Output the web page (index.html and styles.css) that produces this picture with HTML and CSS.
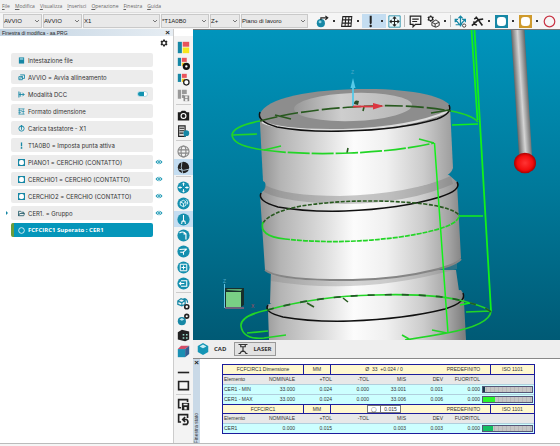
FILE: index.html
```html
<!DOCTYPE html>
<html lang="it">
<head>
<meta charset="utf-8">
<title>Finestra di modifica - aa.PRG</title>
<link rel="stylesheet" href="styles.css">
</head>
<body>
<svg class="defs" aria-hidden="true">
  <symbol id="chev" viewBox="0 0 8 8"><path d="M2 3l2 2 2-2" fill="none" stroke="#777" stroke-width="1"/></symbol>
  <symbol id="eye" viewBox="0 0 16 12"><path d="M1 6Q8-3 15 6Q8 15 1 6Z" fill="#1193b0"/><circle cx="8" cy="6" r="3.600" fill="#fff"/><circle cx="8" cy="6" r="2" fill="#1193b0"/></symbol>
  <symbol id="sq" viewBox="0 0 16 16"><path fill="currentColor" d="M0 0h16v16H0z"/><rect x="2.500" y="2.500" width="11" height="11" rx="4" fill="#fff"/></symbol>
  <symbol id="ball" viewBox="0 0 16 16"><circle cx="8" cy="8" r="7.500" fill="#148fae"/></symbol>
  <symbol id="palette" viewBox="0 0 16 16"><path fill="#1687a5" d="M1 1h5v14H1z"/><path fill="#e9545b" d="M7 1h8v6H7z"/><path fill="#f6e61d" d="M7 8h8v7H7z"/></symbol>
  <symbol id="palette-s" viewBox="0 0 16 16"><path fill="#1687a5" d="M1 1h4v10H1z"/><path fill="#e9545b" d="M6 1h6v5H6z"/><path fill="#f6c61d" d="M6 7h4v4H6z"/></symbol>
  <symbol id="gear" viewBox="0 0 16 16"><path fill="#222" fill-rule="evenodd" d="M6.500 1h3l.5 2 1.500.8 2-.6 1.500 2.600-1.500 1.400v1.600l1.500 1.400-1.500 2.600-2-.6-1.500.8-.5 2h-3L6 13l-1.500-.8-2 .6L1 10.200l1.500-1.400V7.200L1 5.800l1.500-2.600 2 .6L6 3zM8 5a3 3 0 1 0 0 6 3 3 0 0 0 0-6z"/></symbol>
</svg>

<nav class="menu" aria-label="Menu">
  <a href="#">File</a><a href="#">Modifica</a><a href="#">Visualizza</a><a href="#">Inserisci</a><a href="#">Operazione</a><a href="#">Finestra</a><a href="#">Guida</a>
</nav>

<div class="toolbar">
  <label class="pick w-s"><select aria-label="Programma"><option>AVVIO</option></select><svg><use href="#chev"/></svg></label>
  <label class="pick w-s"><select aria-label="Allineamento"><option>AVVIO</option></select><svg><use href="#chev"/></svg></label>
  <label class="pick w-l"><select aria-label="Tastatore"><option>X1</option></select><svg><use href="#chev"/></svg></label>
  <label class="pick w-m"><select aria-label="Punta"><option>*T1A0B0</option></select><svg><use href="#chev"/></svg></label>
  <label class="pick w-xs"><select aria-label="Asse"><option>Z+</option></select><svg><use href="#chev"/></svg></label>
  <label class="pick w-xl"><select aria-label="Piano"><option>Piano di lavoro</option></select><svg><use href="#chev"/></svg></label>
  <div class="tools">
    <button class="drop" aria-label="Vista"><svg viewBox="0 0 16 16"><circle cx="6" cy="10" r="5" fill="#1687a5"/><circle cx="5" cy="8.500" r="1.800" fill="#8fd3e3"/><path d="M6 6V3.500h8M11.500 1l3 2.500-3 2.500" fill="none" stroke="#222" stroke-width="1.400"/></svg></button>
    <button class="drop" aria-label="Griglia"><svg viewBox="0 0 16 16"><path d="M3.500 2h11l-1 12H2zM7.200 2l-1 12M11 2l-1 12M3 6h11M2.500 10H14" fill="none" stroke="#222" stroke-width="1.300"/></svg></button>
    <button class="drop on" aria-label="Punta attiva"><svg viewBox="0 0 16 16"><path d="M7 1h2.500v8.500l-.7 2H7.700L7 9.500z" fill="#222"/><circle cx="8.200" cy="13.500" r="1.500" fill="#222"/></svg></button>
    <button aria-label="Adatta"><svg viewBox="0 0 16 16"><path d="M1 1h14v14H1z" fill="#e8f6fa" stroke="#1687a5"/><path d="M8 2.500v11M2.500 8h11M6 4.500l2-2 2 2M6 11.500l2 2 2-2M4.500 6l-2 2 2 2M11.500 6l2 2-2 2" fill="none" stroke="#222" stroke-width="1.300"/></svg></button>
    <i></i>
    <button class="note" aria-label="Commento"><svg viewBox="0 0 16 16"><path d="M1.500 1.500h13v10H8L5 14.500v-3H1.500zM4 5h8M4 8h6" fill="none" stroke="#222" stroke-width="1.500"/></svg></button>
    <button class="drop" aria-label="Impostazioni"><svg viewBox="0 0 16 16"><use href="#gear" x="0" y="0" width="9" height="9"/><path d="M6 9l5-3 4 3v4l-4 2-5-2zM6 9l4 2 5-2M10 11v4" fill="none" stroke="#333" stroke-width="1.200"/></svg></button>
    <i></i>
    <button aria-label="Percorso"><svg viewBox="0 0 16 16"><path d="M8 14V2M5.500 4L8 1.500 10.500 4M8 13L2 6M1.500 9V5.500H5M8 12l5-6M10 5.500h4V9M2 12h8" fill="none" stroke="#1687a5" stroke-width="1.500"/><circle cx="12.500" cy="13" r="2" fill="#fff" stroke="#222"/></svg></button>
    <button class="drop" aria-label="Misura"><svg viewBox="0 0 16 16"><path d="M1 13L9 6l6-1M6 2l3 4 5 7M3 8l4 5M4 5l3-2" fill="none" stroke="#222" stroke-width="2"/></svg></button>
    <button class="drop teal" aria-label="Cerchio teorico"><svg><use href="#sq"/></svg></button>
    <button class="drop gold" aria-label="Cerchio costruito"><svg><use href="#sq"/></svg></button>
    <button aria-label="Cerchio"><svg viewBox="0 0 16 16"><circle cx="8" cy="8" r="6.500" fill="none" stroke="#c93545" stroke-width="1.500"/></svg></button>
  </div>
</div>

<main class="work">
  <aside class="edit">
    <header class="edit-title"><span>Finestra di modifica - aa.PRG</span><button aria-label="Chiudi">×</button></header>
    <button class="cog" aria-label="Opzioni"><svg><use href="#gear"/></svg></button>
    <ul class="steps">
      <li><div class="step"><svg viewBox="0 0 16 16"><path fill="#1687a5" d="M2 1h12v14H2z"/><path fill="#a8dce8" d="M4 3h8v3H4z"/></svg>Intestazione file</div></li>
      <li><div class="step"><svg viewBox="0 0 16 16"><path d="M5 2h10v8H9M2 6h8v7H2z" fill="none" stroke="#1687a5" stroke-width="2"/><path d="M4 11l7-7" stroke="#1687a5" stroke-width="2"/></svg>AVVIO = Avvia allineamento</div></li>
      <li><div class="step"><svg viewBox="0 0 16 16"><path d="M2 1v14M2 8h12M10 4l4 4-4 4M5 3v10" fill="none" stroke="#1687a5" stroke-width="2"/></svg>Modalità DCC<input class="switch" type="checkbox" aria-label="Modalità DCC" checked></div></li>
      <li><div class="step"><svg viewBox="0 0 16 16"><path d="M1 2h14M1 6h8M1 10h6M1 14h14M3 1v13M12 2v12M8 8h7" fill="none" stroke="#1687a5" stroke-width="1.500"/></svg>Formato dimensione</div></li>
      <li><div class="step"><svg viewBox="0 0 16 16"><circle cx="8" cy="8" r="6" fill="none" stroke="#1687a5" stroke-width="2"/><path d="M8 0v11M5 5l3-3 3 3" fill="none" stroke="#1687a5" stroke-width="2"/></svg>Carica tastatore - X1</div></li>
      <li><div class="step"><svg viewBox="0 0 16 16"><path d="M6.500 1h3v9h-3z" fill="#1687a5"/><circle cx="8" cy="13.500" r="2" fill="#1687a5"/></svg>T1A0B0 = Imposta punta attiva</div></li>
      <li><div class="step"><svg><use href="#sq"/></svg>PIANO1 = CERCHIO (CONTATTO)</div><svg class="eye"><use href="#eye"/></svg></li>
      <li><div class="step"><svg><use href="#sq"/></svg>CERCHIO1 = CERCHIO (CONTATTO)</div><svg class="eye"><use href="#eye"/></svg></li>
      <li><div class="step"><svg><use href="#sq"/></svg>CERCHIO2 = CERCHIO (CONTATTO)</div><svg class="eye"><use href="#eye"/></svg></li>
      <li class="group"><div class="step"><svg viewBox="0 0 16 16"><path d="M1 13V3h5l2 2h5v3M1 13l3-5h11l-2 5z" fill="none" stroke="#14505f" stroke-width="1.800"/></svg>CER1. = Gruppo</div><svg class="eye"><use href="#eye"/></svg></li>
      <li><div class="step current"><svg viewBox="0 0 16 16"><circle cx="8" cy="8" r="6.500" fill="none" stroke="#fff" stroke-width="1.800"/></svg>FCFCIRC1 Superato : CER1</div></li>
    </ul>
  </aside>

  <div class="strip">
    <button aria-label="Colori"><svg><use href="#palette"/></svg></button>
    <button aria-label="Aggiungi colori"><svg viewBox="0 0 16 16"><use href="#palette-s"/><circle cx="11.500" cy="11.500" r="3" fill="#fff" stroke="#111" stroke-width="3"/></svg></button>
    <button aria-label="Modifica colori"><svg viewBox="0 0 16 16"><use href="#palette-s"/><circle cx="11.500" cy="11.500" r="3.300" fill="#fff" stroke="#222" stroke-width="1.600"/></svg></button>
    <button aria-label="Salva colori"><svg viewBox="0 0 16 16"><path fill="#999" d="M1 1h4v11H1zM6 1h6v5H6zM6 7h3v4H6z"/><path fill="#8a8a8a" d="M8 8h7v7H8z"/><path fill="#eee" d="M10 9h3v2h-3zM10 12h3v3h-3z"/></svg></button>
    <hr>
    <button aria-label="Istantanea"><svg viewBox="0 0 16 16"><path fill="#1c1c1c" d="M1 4h3l2-2h4l2 2h3v10H1z"/><circle cx="8" cy="8.500" r="3" fill="none" stroke="#fff" stroke-width="1.400"/></svg></button>
    <button aria-label="Rapporto"><svg viewBox="0 0 16 16"><path fill="#ddd" stroke="#222" stroke-width="1.400" d="M2 1h8v13H2z"/><path stroke="#222" stroke-width="1.300" d="M3 4h6M3 7h6M3 10h5"/><circle cx="11.500" cy="10" r="3.500" fill="#1687a5"/><path d="M9 12v3l3-2" fill="#1687a5"/></svg></button>
    <hr>
    <button aria-label="Reticolo"><svg viewBox="0 0 16 16"><g fill="none" stroke="#888" stroke-width="1.400"><circle cx="8" cy="8" r="6.800"/><ellipse cx="8" cy="8" rx="3" ry="6.800"/><path d="M1.500 6h13M1.500 10h13"/></g></svg></button>
    <button class="on" aria-label="Solido"><svg viewBox="0 0 16 16"><circle cx="8" cy="8" r="7" fill="#222"/><path d="M6 1Q4 8 7 15M2 10q6 3 13 0" fill="none" stroke="#c5dcee" stroke-width="1"/></svg></button>
    <hr>
    <button aria-label="Centra"><svg viewBox="0 0 16 16"><use href="#ball"/><path d="M8 2v4M8 10v4M2 8h4M10 8h4M6.500 4L8 2.500 9.500 4M6.500 12L8 13.500 9.500 12M4 6.500L2.500 8 4 9.500M12 6.500L13.500 8 12 9.500" fill="none" stroke="#fff" stroke-width="1.200"/></svg></button>
    <button aria-label="Ruota"><svg viewBox="0 0 16 16"><use href="#ball"/><path d="M4 6l4-2 3 2v4l-3 2-4-2zM4 6l4 2 3-2M8 8v4M11 3q3 2 2 6" fill="none" stroke="#d8f2f8" stroke-width="1.200"/></svg></button>
    <button class="on" aria-label="Tastatore"><svg viewBox="0 0 16 16"><use href="#ball"/><path d="M8 2.500v7.500M6 10v2.500l-1 .5M10 10v2.500l1 .5M6 10h4" fill="none" stroke="#fff" stroke-width="1.300"/></svg></button>
    <button aria-label="Sezione"><svg viewBox="0 0 16 16"><use href="#ball"/><path d="M3 5q5-3 8 1v7M8 6h3" fill="none" stroke="#fff" stroke-width="1.400"/></svg></button>
    <button aria-label="Punto"><svg viewBox="0 0 16 16"><use href="#ball"/><path d="M3 5.500l9-.5M12 5L8 8.500V12M4 9h4" fill="none" stroke="#fff" stroke-width="1.300"/></svg></button>
    <button aria-label="Aggiungi"><svg viewBox="0 0 16 16"><use href="#ball"/><path d="M4 4h8v8H4zM8 5.500v5M5.500 8h5" fill="none" stroke="#fff" stroke-width="1.200"/></svg></button>
    <button aria-label="Indietro"><svg viewBox="0 0 16 16"><use href="#ball"/><path d="M5 4.500h7v7H5M3 8h6M5 6L3 8l2 2" fill="none" stroke="#fff" stroke-width="1.300"/></svg></button>
    <hr>
    <button aria-label="Assieme"><svg viewBox="0 0 16 16"><path d="M1 5l4-3 5 2v5l-4 2-5-2zM1 5l5 2 4-3M6 7v4M8 2q5 0 5 5" fill="none" stroke="#1687a5" stroke-width="1.500"/><circle cx="12" cy="12" r="2.500" fill="#fff" stroke="#222" stroke-width="2"/></svg></button>
    <button aria-label="Oggetto"><svg viewBox="0 0 16 16"><circle cx="6" cy="10" r="5" fill="#1687a5"/><path fill="#b9e6f0" d="M3 8l3-2 3 2-3 1.500z"/><circle cx="12" cy="4" r="2.300" fill="#fff" stroke="#222" stroke-width="2"/></svg></button>
    <button aria-label="Macchina"><svg viewBox="0 0 16 16"><path fill="#222" d="M1 4l5-3 9 2v10l-5 2-9-2z"/><path fill="#9dc" d="M7 6h2v2H7zM11 6h2v2h-2zM7 10h2v2H7zM11 10h2v2h-2z"/></svg></button>
    <button aria-label="Cubo"><svg viewBox="0 0 16 16"><path fill="#1b8fb3" d="M1 5h9v10H1z"/><path fill="#d34e68" d="M1 5l4-4h10l-5 4z"/><path fill="#355e92" d="M10 5l5-4v10l-5 4z"/></svg></button>
    <div class="strip-end">
      <button aria-label="Riduci"><svg viewBox="0 0 16 16"><path stroke="#222" stroke-width="2" d="M1 8h14"/></svg></button>
      <button aria-label="Ingrandisci"><svg viewBox="0 0 16 16"><path fill="none" stroke="#222" stroke-width="2" d="M2 3h12v10H2z"/></svg></button>
      <hr>
      <button aria-label="Salva"><svg viewBox="0 0 16 16"><path fill="none" stroke="#222" stroke-width="2" d="M5 12H2V2h11v3"/><path fill="#222" d="M6 6h9v9H6z"/><path fill="#eee" d="M8 7h5v2H8zM9 11h3v3H9z"/></svg></button>
      <button aria-label="Ripristina"><svg viewBox="0 0 16 16"><path fill="none" stroke="#222" stroke-width="2" d="M5 11H2V2h11v4M8 8h4q3 3 0 6H7M10 5L7 8l3 3"/></svg></button>
    </div>
  </div>

  <div class="right">
    <svg class="scene" viewBox="193 30 367 310" preserveAspectRatio="xMinYMin slice" role="img" aria-label="Vista CAD">
      <defs>
        <linearGradient id="bg" x1="0" y1="0" x2="0" y2="1"><stop offset="0" stop-color="#0094bc"/><stop offset=".5" stop-color="#007a9b"/><stop offset="1" stop-color="#005a75"/></linearGradient>
        <linearGradient id="metal" gradientUnits="userSpaceOnUse" x1="260" y1="0" x2="464" y2="0"><stop offset="0" stop-color="#909090"/><stop offset=".1" stop-color="#b4b4b4"/><stop offset=".32" stop-color="#dedede"/><stop offset=".46" stop-color="#fcfcfc"/><stop offset=".62" stop-color="#f0f0f0"/><stop offset=".8" stop-color="#cccccc"/><stop offset=".93" stop-color="#a2a2a2"/><stop offset="1" stop-color="#7f7f7f"/></linearGradient>
        <linearGradient id="bore" x1="0" y1="0" x2="1" y2="0"><stop offset="0" stop-color="#989898"/><stop offset=".4" stop-color="#cecece"/><stop offset="1" stop-color="#b5b5b5"/></linearGradient>
        <linearGradient id="rod" gradientUnits="userSpaceOnUse" x1="514" y1="93" x2="529" y2="92"><stop offset="0" stop-color="#555"/><stop offset=".5" stop-color="#d5d5d5"/><stop offset="1" stop-color="#606060"/></linearGradient>
        <radialGradient id="ruby"><stop offset="0" stop-color="#ff3434"/><stop offset=".7" stop-color="#f20d0d"/><stop offset="1" stop-color="#a80000"/></radialGradient>
      </defs>
      <path fill="url(#bg)" d="M193 30h3000v310H193z"/>
      <path fill="none" stroke="#12f11a" stroke-width="1.800" d="M471.500 30L477.500 120M474.500 30L491 311"/>
      <path fill="none" stroke="#12f11a" stroke-width="1.500" d="M452 125L478 124"/>
      <path fill="url(#metal)" d="M267 305Q300 292 365 292T461 290Q465 295 464 302L466 340H269L268 310Z"/>
      <path fill="url(#metal)" d="M271 270H456L459 291Q462 297 452 303 420 315 350 316 285 315 270 303Z"/>
      <path fill="#888" opacity=".35" d="M271 275Q350 292 457 262V269Q360 296 271 281Z"/>
      <path fill="url(#metal)" d="M260 195Q350 175 457 183L461 258Q455 266 425 272 385 281 330 280 275 278 265 270Z"/>
      <path fill="none" stroke="#858585" stroke-width="2" d="M265 270Q276 279 330 280 385 281 425 272 455 266 461 259"/>
      <path fill="url(#metal)" d="M264 180Q268 188 262 192 260 195 261 199 275 210 330 210 410 210 452 193 460 187 457 182L449 175Z"/>
      <path fill="#777" opacity=".4" d="M265 185Q285 196 340 196 410 194 451 176L453 184Q410 203 345 204 285 203 264 192Z"/>
      <path fill="url(#metal)" d="M259.500 114L450 106 453 168Q450 179 420 186 375 194 320 192 275 190 263 181Z"/>
      <path fill="#8d8d8d" d="M260 114C266 98 310 89 367 89 414 89 448 97 450 107 450 120 398 130 343 130 290 130 258 124 260 114Z"/>
      <ellipse cx="353" cy="107" rx="59" ry="14" fill="url(#bore)" transform="rotate(-2 353 107)"/>
      <path fill="none" stroke="#dcdcdc" stroke-width="2" d="M262 122Q280 131 343 130 410 128 449 111"/>
      <g fill="none" stroke="#101010" stroke-width="1.500">
        <path d="M260 112Q256 121 277 127 302 132 345 131 400 130 437 119 453 113 449 105"/>
        <path d="M261 193Q257 201 278 207 305 212 345 211 400 209 440 197 462 190 457 182"/>
        <path d="M268 305Q263 312 283 317 310 322 350 321 405 319 445 309 467 302 463 293"/>
      </g>
      <g fill="none" stroke="#28591f" stroke-width="1.600">
        <path stroke-dasharray="18 3" d="M260 121Q300 110 353 107 405 103 451 111"/>
        <path stroke-dasharray="4 1.500" d="M263 223Q270 212 301 206 360 197 425 204 453 208 459 215"/>
        <path d="M275 115l16 4M449 110l-18 3M347 153l1-5M363 111l1-4M307 303l7 4M343 298l5 4"/>
      </g>
      <g fill="none" stroke="#22d526" stroke-width="1.700">
        <path d="M260 121Q233 126 232 135 233 146 264 150"/>
        <path stroke-dasharray="22 2" d="M264 150Q300 155 350 153 400 151 434 143"/>
        <path d="M232 135l25-1M264 150l17-4M434 143l-15-4M451 111Q472 115 478 122"/>
        <path d="M263 222Q258 236 285 239"/>
        <path stroke-dasharray="5 1" d="M285 239Q340 245 400 237 460 228 459 215"/>
        <path d="M267 310Q240 316 241 326 243 340 264 338L286 335M247 333l21-2M491 311Q490 325 447 333 430 336 405 340M447 333l-15-3M402 335l7 4M466 312l25-1"/>
        <path d="M267 310Q318 296 375 295 440 293 470 303 486 307 491 312"/>
        <path stroke="#235927" stroke-dasharray="7 10" d="M267 310Q318 296 375 295 440 293 470 303 486 307 491 312"/>
        <path stroke="#12f11a" stroke-width="1.500" d="M434.500 143L448 333M459 216h24M460 305l10-2"/>
      </g>
      <path d="M353 106V84" stroke="#55c9e8" stroke-width="1.800"/><path fill="#55c9e8" d="M350.500 88L353 78l2.500 10z"/>
      <path d="M353 106.500H375" stroke="#dc3540" stroke-width="1.800"/><path fill="#dc3540" d="M373 103l11 3-11 3.500z"/>
      <path fill="#284b28" d="M354 104q0-5 5-3l-1 4z"/>
      <text x="351" y="74" class="axis">Z</text>
      <path fill="url(#rod)" d="M511 30h13.500L532 156h-13z"/>
      <ellipse cx="525" cy="163" rx="11" ry="10.300" fill="url(#ruby)"/>
      <path fill="#182f2c" d="M225 288h19v17l-3 2H225z"/><path fill="#79cf85" d="M226 292h15v15H226z"/><path fill="#5eaa71" d="M226 290l2-1h14l-1 2z"/>
      <path stroke="#67c5e5" d="M224.500 284v24"/><path stroke="#d9607d" d="M225 308h19"/>
      <text x="223" y="283" class="axis">Z</text><text x="251" y="308" class="axis red">X</text>
    </svg>

    <div class="tabs">
      <button class="tab"><svg viewBox="0 0 16 16"><path fill="#1495b5" d="M8 0l7 4v8l-7 4-7-4V4z"/><path fill="#c9eef6" d="M8 2l4.500 2.500L8 7 3.500 4.500z"/></svg>CAD</button>
      <button class="tab framed"><svg viewBox="0 0 16 16"><path fill="none" stroke="#333" stroke-width="1.600" d="M2 2h12M5 2v3h6V2M8 5v7M4 13l4-3 4 3M2 14h3M11 14h3"/></svg>LASER</button>
    </div>

    <section class="status">
      <header class="status-title"><button aria-label="Chiudi">×</button><span>Finestra stato</span></header>
      <div class="report">
        <div class="dim"><span>FCFCIRC1 Dimensione</span><span>MM</span><span class="spec"><b>Ø&nbsp; 33 &nbsp;+0.024 / 0</b><em>PREDEFINITO</em></span><span>ISO 1101</span></div>
        <table>
          <tr><th>Elemento</th><th>NOMINALE</th><th>+TOL</th><th>-TOL</th><th>MIS</th><th>DEV</th><th>FUORITOL</th><th></th></tr>
          <tr><td>CER1 - MIN</td><td>33.000</td><td>0.024</td><td>0.000</td><td>33.001</td><td>0.001</td><td>0.000</td><td><div class="bar"><div class="dark" style="width:4%"></div></div></td></tr>
          <tr><td>CER1 - MAX</td><td>33.000</td><td>0.024</td><td>0.000</td><td>33.006</td><td>0.006</td><td>0.000</td><td><div class="bar"><div class="lime" style="width:24%"></div></div></td></tr>
        </table>
        <div class="dim"><span>FCFCIRC1</span><span>MM</span><span class="spec"><b class="frame"><i>◯</i><i>0.015</i></b><em>PREDEFINITO</em></span><span>ISO 1101</span></div>
        <table>
          <tr><th>Elemento</th><th>NOMINALE</th><th>+TOL</th><th>-TOL</th><th>MIS</th><th>DEV</th><th>FUORITOL</th><th></th></tr>
          <tr><td>CER1</td><td>0.000</td><td>0.015</td><td></td><td>0.003</td><td>0.003</td><td>0.000</td><td><div class="bar"><div class="green" style="width:20%"></div></div></td></tr>
        </table>
      </div>
    </section>
  </div>
</main>
<footer class="foot"></footer>
</body>
</html>
```

FILE: styles.css
```css
* { box-sizing: border-box; }
body {
  margin: 0;
  min-height: 100vh;
  display: flex;
  flex-direction: column;
  background: #f0f0f0;
  color: #333;
  font-family: "Liberation Sans", sans-serif;
  font-size: 6px;
  overflow: hidden;
}
button {
  border: 0;
  padding: 0;
  background: none;
  color: inherit;
  font: inherit;
  display: flex;
  align-items: center;
  justify-content: center;
}
.defs { position: absolute; width: 0; height: 0; }

.menu {
  display: flex;
  gap: 5px;
  height: 12px;
  padding: 0 2px;
  align-items: center;
  font-family: "Open Sans", sans-serif;
  font-size: 5px;
}
.menu a { color: #666; text-decoration: none; }
.menu a::first-letter { text-decoration: underline; }

.toolbar {
  display: flex;
  height: 17px;
  padding: 1px 0 1px 3px;
  border-top: 1px solid #ddd;
  background: #f5f5f5;
}
.pick {
  display: grid;
  margin-right: 1px;
  border: 1px solid #c9c9c9;
  background: #e9e9e9;
  align-items: center;
}
.pick > * { grid-area: 1 / 1; }
.pick svg { width: 8px; height: 8px; justify-self: end; pointer-events: none; }
.pick select {
  appearance: none;
  width: 100%;
  border: 0;
  padding: 0;
  background: none;
  color: #222;
  font: 6px "Liberation Sans", sans-serif;
}
.w-s { width: 39px; }
.w-l { width: 77px; }
.w-m { width: 48px; }
.w-xs { width: 30px; }
.w-xl { width: 67px; }

.tools { display: flex; flex: 1; padding-left: 5px; }
.tools button { width: 17px; flex: none; }
.tools svg { width: 13px; height: 13px; }
.tools .drop { width: 24px; justify-content: flex-start; padding-left: 2px; gap: 4px; }
.tools .drop::after { content: ""; width: 2px; height: 2px; background: #333; }
.tools .on { background: #c4ddf1; }
.tools i { width: 1px; margin: 1px; background: #bbb; }
.tools .note { width: 19px; }
.teal { color: #1687a5; }
.gold { color: #cf9a2c; }

.work { display: flex; flex: 1; min-height: 0; }

.edit { width: 174px; background: #fff; border-right: 1px solid #ccc; }
.edit-title {
  display: flex;
  justify-content: space-between;
  align-items: center;
  height: 7px;
  padding: 0 3px 0 2px;
  background: linear-gradient(90deg, #c2d3e2, #e6edf3);
  font-size: 5px;
  color: #222;
}
.edit-title button, .status-title button { font-size: 8px; line-height: 7px; font-weight: bold; color: #222; }
.cog { margin: 2px 4px 0 auto; width: 10px; height: 10px; }
.cog svg { width: 8px; height: 8px; }
.steps {
  list-style: none;
  margin: 5px 0 0;
  padding: 0 9px 0 11px;
  display: flex;
  flex-direction: column;
  gap: 3px;
  font-family: Inter, sans-serif;
  font-size: 6px;
  color: #333;
}
.steps li { display: grid; grid-template-columns: 142px 12px; align-items: center; position: relative; }
.step {
  display: flex;
  align-items: center;
  gap: 3px;
  height: 14px;
  padding: 0 5px 0 7px;
  border-radius: 2px;
  background: #ececec;
  white-space: nowrap;
}
.step svg { width: 7px; height: 7px; color: #1687a5; flex: none; }
.steps .eye { width: 8px; height: 6px; justify-self: center; }
.group::before {
  content: "";
  position: absolute;
  left: -5px;
  border: 2px solid transparent;
  border-left-color: #1687a5;
}
.current {
  background: #0596ba;
  color: #fff;
  font: bold 6px "Open Sans", sans-serif;
  border-left: 3px solid #6b9d3a;
  padding-left: 4px;
}
.switch {
  appearance: none;
  width: 11px;
  height: 6px;
  margin: 0 0 0 auto;
  border-radius: 3px;
  background: linear-gradient(90deg, #1193b0 70%, #fff 70%);
  border: 1px solid #b4dbe5;
}

.strip {
  width: 19px;
  padding-top: 10px;
  background: linear-gradient(#fff 7px, #f3f3f3 7px);
  display: flex;
  flex-direction: column;
}
.strip button { width: 100%; height: 16px; flex: none; }
.strip svg { width: 13px; height: 13px; }
.strip hr { width: 15px; margin: 1px auto 2px; border: 0; border-top: 1px solid #ccc; }
.strip .on { background: #c4ddf1; }
.strip-end { margin-top: 8px; }
.strip-end button { height: 15px; }
.strip-end button:first-child { height: 11px; }

.right { flex: 1; min-width: 0; display: flex; flex-direction: column; }
.scene { flex: 1; width: 100%; min-height: 0; border-top: 1px solid #777; display: block; }
.axis { font: 5px "Liberation Sans", sans-serif; fill: #4ba9c8; }
.red { fill: #b5485c; }

.tabs { display: flex; height: 19px; padding: 2px 4px; border-bottom: 1px solid #888; background: #eee; }
.tab { gap: 5px; padding: 0 6px 0 0; font: bold 6px "Open Sans", sans-serif; }
.tab svg { width: 12px; height: 12px; }
.framed { border: 1px solid #999; gap: 4px; padding: 0 3px 0 2px; background: #e2e2e2; margin-left: 2px; }

.status { display: flex; height: 84px; background: #fff; }
.status-title {
  width: 7px;
  display: flex;
  flex-direction: column;
  justify-content: space-between;
  align-items: center;
  background: #c9d9e7;
  font-size: 5px;
  color: #333;
}
.status-title span { writing-mode: vertical-rl; transform: rotate(180deg); line-height: 7px; }
.report {
  width: 313px;
  margin: 5px 0 0 22px;
  align-self: flex-start;
  border: 1px solid #1c1c9c;
  font-size: 5px;
  color: #333;
}
.dim {
  display: grid;
  grid-template-columns: 80px 27px 1fr 44px;
  height: 10px;
  line-height: 8px;
  background: #fff8cf;
  border-bottom: 1px solid #1c1c9c;
  text-align: center;
}
table + .dim { border-top: 1px solid #1c1c9c; }
.dim > span + span { border-left: 1px solid #1c1c9c; }
.dim b, .dim em, .dim i { font-weight: normal; font-style: normal; }
.spec { display: grid; grid-template-columns: 106px 1fr; justify-items: center; }
.frame { display: flex; border: 1px solid #777; line-height: 6px; background: #fff; }
.frame i { padding: 0 3px; }
.frame i + i { border-left: 1px solid #777; }
table { width: 100%; table-layout: fixed; border-collapse: collapse; }
th, td { width: 37px; height: 10px; padding: 0 1px; line-height: 6px; font-weight: normal; text-align: right; }
th { background: #e8e8e8; height: 9px; }
td { background: #ccffff; border-top: 1px solid #b0cfdd; }
th:first-child, td:first-child { width: 36px; text-align: left; }
th:last-child { width: 53px; }
.bar {
  height: 7px;
  border: 1px solid #557;
  background: repeating-linear-gradient(90deg, #c6c6c6 0 3px, #b7b7b7 3px 4px);
}
.bar div { height: 100%; }
.dark { background: #14394a; }
.lime { background: #2cf52c; }
.green { background: #12bf62; }

.foot { height: 4px; border-top: 1px solid #bbb; background: #f5f5f5; }
```
